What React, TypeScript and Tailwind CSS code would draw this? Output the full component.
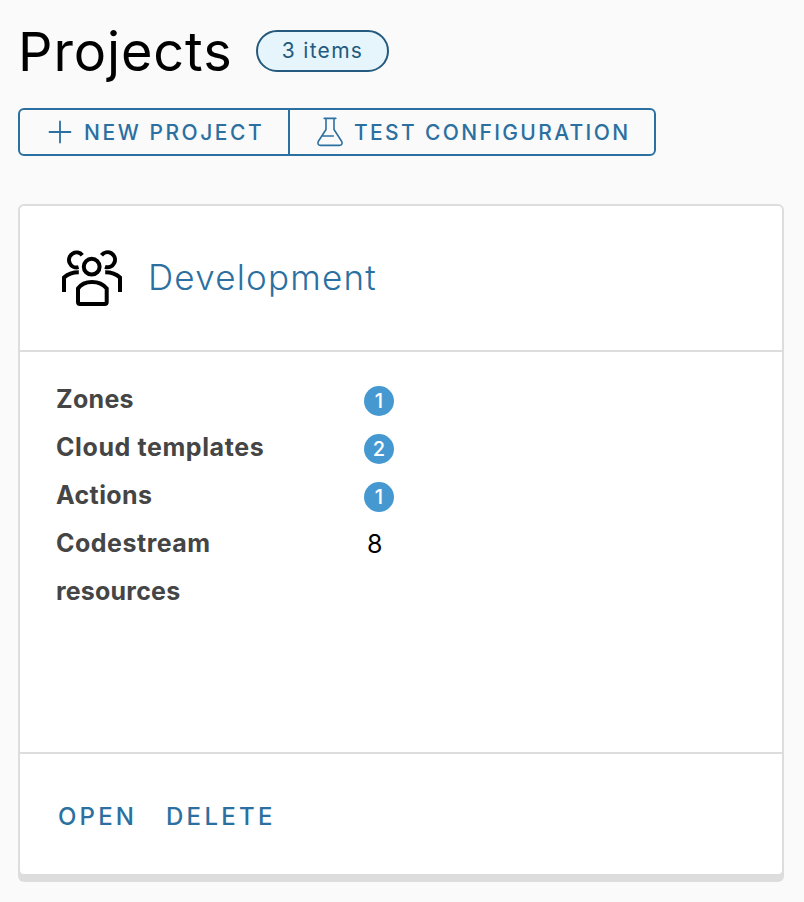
import React from "react";

function PlusIcon() {
  return (
    <svg width="24" height="24" viewBox="0 0 24 24" fill="none" stroke="currentColor" strokeWidth="1.8" strokeLinecap="round">
      <path d="M1.5 12h21M12 1.5v21" />
    </svg>
  );
}

function FlaskIcon() {
  return (
    <svg width="28" height="30" viewBox="0 0 28 30" fill="none" stroke="currentColor" strokeWidth="1.6" strokeLinecap="round" strokeLinejoin="round">
      <path d="M8.2 1.4h11.6M10 1.4v11.1L2.4 24.2c-1.2 2.2-.2 4.2 2.2 4.2h18.800c2.400 0 3.400-2 2.200-4.200L18 12.500V1.400M6.300 19h11" />
    </svg>
  );
}

function UsersIcon() {
  return (
    <svg width="64" height="60" viewBox="60 248 64 60" fill="none" stroke="#000" strokeWidth="4">
      <circle cx="91.700" cy="266.700" r="7.900" />
      <path d="M82.300 255.200a7.500 7.500 0 1 0-3.700 12" />
      <path d="M101.500 255.200a7.500 7.500 0 1 1 3.500 11.600" />
      <path d="M64 292v-14.500q5.500-5.300 14.800-5.300" />
      <path d="M120 292v-14.500q-5.500-5.300-14.800-5.300" />
      <path d="M80 304h24.700q2 0 2-2v-13.500q-5.200-6.500-14.700-6.500t-14 6.500V302q0 2 2 2Z" />
    </svg>
  );
}

const resources = [
  { name: "Zones", count: 1, tracking: "tracking-[0.3px]" },
  { name: "Cloud templates", count: 2, tracking: "tracking-[0.6px]" },
  { name: "Actions", count: 1, tracking: "tracking-[0.4px]" },
];

export default function App() {
  return (
    <main className="flex h-[902px] w-[804px] flex-col bg-[#fafafa] px-[18px] font-[Inter,sans-serif] text-[#2b70a0]">
      <header className="flex h-[108px] items-start pt-[30px]">
        <h1 className="-mt-2 w-[238px] whitespace-nowrap text-[54px] font-normal leading-[60px] tracking-[0.9px] text-black">Projects</h1>
        <span className="flex h-[42px] w-[133px] items-center justify-center rounded-full border-2 border-[#25597d] bg-[#e6f5fc] text-[21px] tracking-[1.3px] text-[#25597d]">
          3 items
        </span>
      </header>

      <div className="flex h-12 w-[638px] rounded-md border-2 border-[#2b70a0] text-[21px] font-medium">
        <button className="flex w-[270px] items-center whitespace-nowrap border-r-2 border-[#2b70a0] pl-7">
          <PlusIcon />
          <span className="ml-3 mt-0.5 tracking-[2.55px]">NEW PROJECT</span>
        </button>
        <button className="flex flex-1 items-center whitespace-nowrap pl-[26px]">
          <FlaskIcon />
          <span className="ml-2.5 mt-0.5 tracking-[2.35px]">TEST CONFIGURATION</span>
        </button>
      </div>

      <section className="mt-12 flex h-[672px] w-[766px] flex-col rounded-md border-2 border-[#ddd] bg-white shadow-[0_6px_0_#ddd]">
        <div className="flex h-[146px] items-center border-b-2 border-[#ddd] pl-10">
          <UsersIcon />
          <h2 className="-mt-0.5 ml-6 whitespace-nowrap text-[35px] font-light leading-[48px] tracking-[1.2px]">Development</h2>
        </div>

        <div className="h-[402px] border-b-2 border-[#ddd] pl-9 pt-[23px] text-[25px] leading-[48px]">
          {resources.map((item) => (
            <div key={item.name} className="flex h-12 items-center">
              <span className={"w-[308px] whitespace-nowrap font-bold text-[#454545] " + item.tracking}>{item.name}</span>
              <span className="mt-[3px] flex size-[30px] items-center justify-center rounded-full bg-[#4699d0] text-[20px] font-medium leading-none text-white">
                {item.count}
              </span>
            </div>
          ))}
          <div className="flex">
            <span className="w-[311px] font-bold text-[#454545]">
              <span className="block tracking-[0.5px]">Codestream</span>
              <span className="block tracking-[0.2px]">resources</span>
            </span>
            <span className="pt-px text-black">8</span>
          </div>
        </div>

        <div className="flex flex-1 items-center pl-[38px] pt-[5px] text-[24px] font-medium">
          <button className="w-[108px] text-left tracking-[3.2px]">OPEN</button>
          <button className="text-left tracking-[3.3px]">DELETE</button>
        </div>
      </section>
    </main>
  );
}
